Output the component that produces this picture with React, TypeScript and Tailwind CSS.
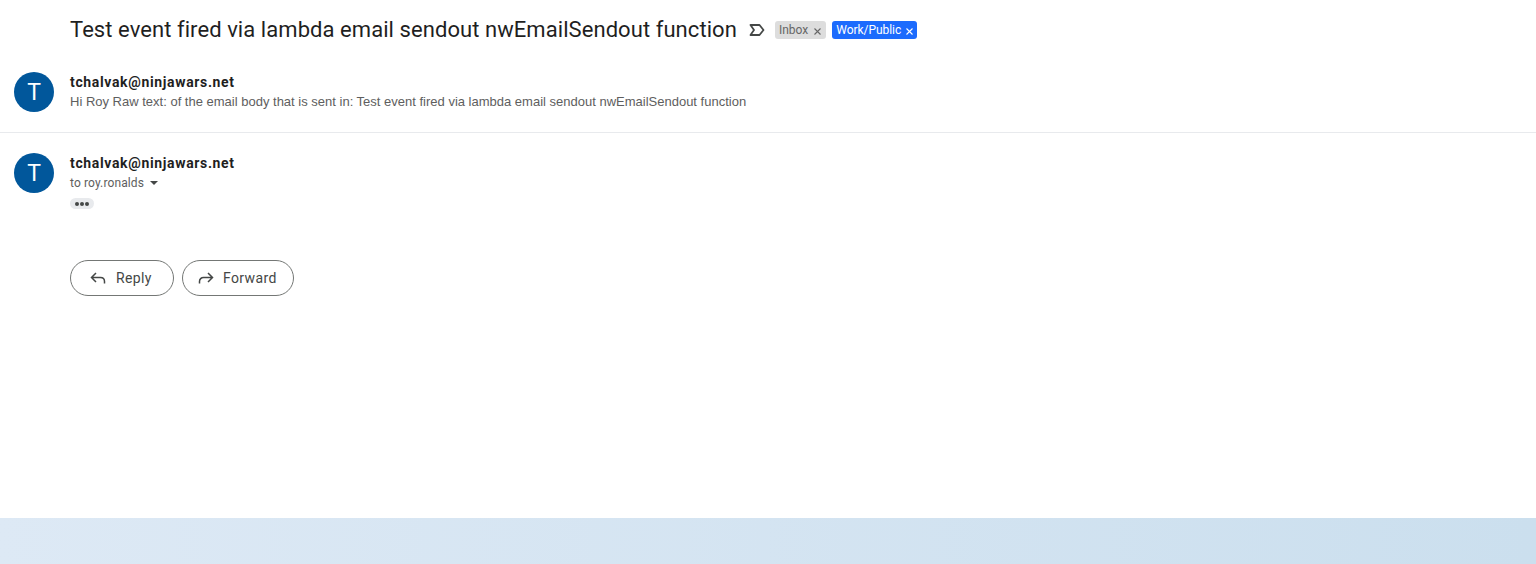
import React from "react";

function Avatar() {
  return (
    <div className="w-10 h-10 rounded-full bg-[#01579b] text-white flex items-center justify-center text-[23px] leading-none shrink-0 font-['Roboto',sans-serif]">
      T
    </div>
  );
}

function Chip({ label, cls, x, gap }: { label: string; cls: string; x: string; gap: string }) {
  return (
    <span className={`h-[18px] rounded-[3px] pl-1 flex items-center ${gap} text-[12px] font-['Roboto',sans-serif] ${cls}`}>
      {label}
      <svg width="7" height="7" viewBox="0 0 7 7" className="mt-[2px]">
        <path d="M0.5 0.5L6.5 6.5M6.5 0.5L0.5 6.5" stroke={x} strokeWidth="1.1" fill="none" />
      </svg>
    </span>
  );
}

function ReplyBtn({ label, width, children }: { label: string; width: string; children: React.ReactNode }) {
  return (
    <button className={`h-9 ${width} rounded-[18px] border border-[#747775] flex items-center pl-[19px] gap-[10px] text-[14px] text-[#444746] font-['Roboto',sans-serif] tracking-[0.38px] bg-white`}>
      {children}
      {label}
    </button>
  );
}

export default function App() {
  return (
    <div className="w-[1536px] h-[564px] bg-white flex flex-col overflow-hidden font-['Roboto',sans-serif]">
      <div className="flex-1 flex flex-col min-h-0">
        <div className="flex items-center h-[60px] pl-[70px]">
          <h1 className="text-[22px] font-normal text-[#1f1f1f] leading-7 tracking-[0.065px] font-['Roboto',sans-serif]">
            Test event fired via lambda email sendout nwEmailSendout function
          </h1>
          <svg width="16" height="12" viewBox="0 0 16 12" className="ml-[12px] mr-[10px]">
            <path d="M1.5 1H10.5L14.5 6L10.5 11H1.5L5 6Z" stroke="#444746" strokeWidth="1.8" fill="none" strokeLinejoin="round" />
          </svg>
          <div className="flex items-center gap-[6px]">
            <Chip label="Inbox" cls="bg-[#dddddd] text-[#666666] pr-[5px]" x="#666666" gap="gap-[6px]" />
            <Chip label="Work/Public" cls="bg-[#1c6bfd] text-white tracking-[-0.05px] pr-1" x="#ffffff" gap="gap-[5px]" />
          </div>
        </div>
        <div className="flex pl-[14px] pt-3 h-[73px] border-b border-[#e8eaed]">
          <Avatar />
          <div className="ml-4 flex flex-col">
            <div className="text-[14px] font-bold leading-5 text-[#1f1f1f] tracking-[0.65px]">tchalvak@ninjawars.net</div>
            <div className="text-[13px] leading-[19px] text-[#5e5e5e] font-['Liberation_Sans',sans-serif]">
              Hi Roy Raw text: of the email body that is sent in: Test event fired via lambda email sendout nwEmailSendout function
            </div>
          </div>
        </div>
        <div className="flex pl-[14px] pt-5">
          <Avatar />
          <div className="ml-4 flex flex-col items-start">
            <div className="text-[14px] font-bold leading-5 text-[#1f1f1f] tracking-[0.65px]">tchalvak@ninjawars.net</div>
            <div className="flex items-center text-[12px] leading-5 text-[#5e5e5e] tracking-[0.12px]">
              to roy.ronalds
              <svg width="8" height="4" viewBox="0 0 8 4" className="ml-[6px]">
                <path d="M0 0H8L4 4Z" fill="#444746" />
              </svg>
            </div>
            <div className="mt-[5px] w-6 h-[11px] rounded-[6px] bg-[#e8eaed] flex items-center justify-center gap-[1px]">
              <span className="w-[4px] h-[4px] rounded-full bg-[#444746]" />
              <span className="w-[4px] h-[4px] rounded-full bg-[#444746]" />
              <span className="w-[4px] h-[4px] rounded-full bg-[#444746]" />
            </div>
            <div className="flex gap-2 mt-[51px]">
              <ReplyBtn label="Reply" width="w-[104px]">
                <svg width="16" height="14" viewBox="0 0 16 14">
                  <path d="M6 2L1.5 6.5L6 11M2 6.5H10.5C12.8 6.5 14.5 8.2 14.5 10.5V12.5" stroke="#444746" strokeWidth="1.5" fill="none" />
                </svg>
              </ReplyBtn>
              <ReplyBtn label="Forward" width="w-[112px]">
                <svg width="16" height="14" viewBox="0 0 16 14" className="-ml-[4px] -mr-[1px]">
                  <path d="M10 2L14.5 6.5L10 11M14 6.5H5.5C3.2 6.5 1.5 8.2 1.5 10.5V12.5" stroke="#444746" strokeWidth="1.5" fill="none" />
                </svg>
              </ReplyBtn>
            </div>
          </div>
        </div>
      </div>
      <div className="h-[46px] shrink-0 bg-gradient-to-r from-[#dde9f5] to-[#cbdfee]" />
    </div>
  );
}
